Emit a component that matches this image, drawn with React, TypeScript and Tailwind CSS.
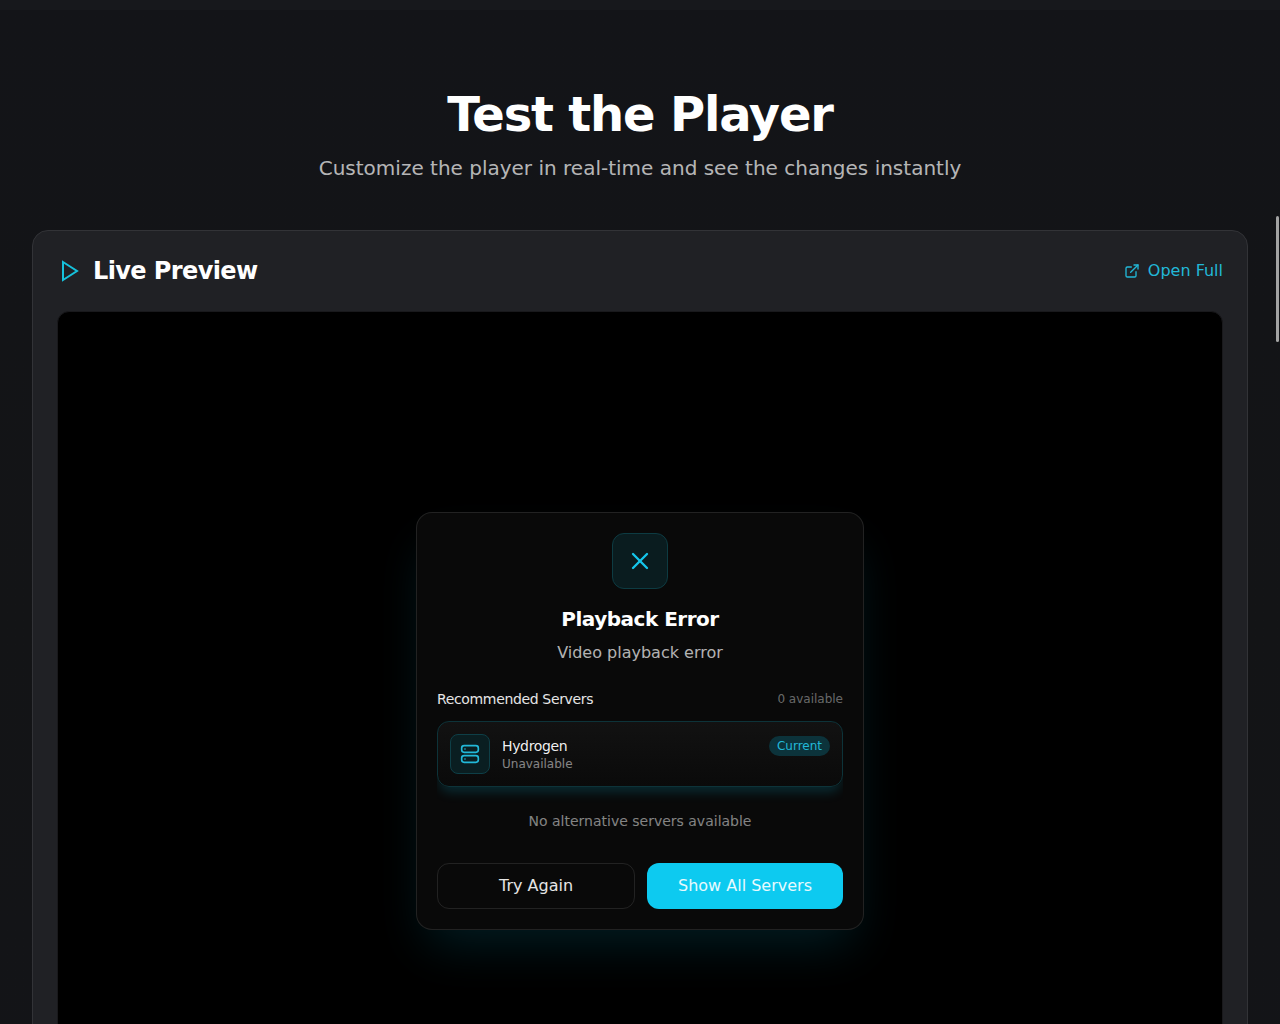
import { ExternalLink, X } from "lucide-react";

const servers = [{ name: "Hydrogen", status: "Unavailable", current: true }];

function PlayIcon({ className }: { className?: string }) {
  return (
    <svg
      className={className}
      viewBox="0 0 24 24"
      fill="none"
      stroke="currentColor"
      strokeWidth="2"
      aria-hidden="true"
    >
      <path d="M6 3l14 9-14 9V3z" />
    </svg>
  );
}

function ServerIcon({ className }: { className?: string }) {
  return (
    <svg
      className={className}
      viewBox="0 0 24 24"
      fill="none"
      stroke="currentColor"
      strokeWidth="2"
      strokeLinecap="round"
      aria-hidden="true"
    >
      <rect x="2" y="2" width="20" height="8" rx="3" />
      <rect x="2" y="14" width="20" height="8" rx="3" />
      <path d="M6 6h.01M6 18h.01" />
    </svg>
  );
}

function ServerRow({ server }: { server: (typeof servers)[number] }) {
  return (
    <li className="flex items-center gap-3 rounded-xl border border-[#0d3339] bg-linear-to-b from-[#121212] to-[#0a0a0a] p-3 shadow-[0_8px_12px_-3px_rgba(13,202,240,0.18)]">
      <div className="flex size-10 shrink-0 items-center justify-center rounded-lg border border-[#0e3f47] bg-[#0a1e21] text-[#22b8d8]">
        <ServerIcon className="size-5" />
      </div>
      <div className="min-w-0 flex-1">
        <div className="flex items-center justify-between">
          <span className="text-sm tracking-tight text-white/95">{server.name}</span>
          {server.current && (
            <span className="rounded-full bg-[#0c333b] px-2 py-0.5 text-xs text-[#22b8d8]">
              Current
            </span>
          )}
        </div>
        <p className="text-xs text-white/50">{server.status}</p>
      </div>
    </li>
  );
}

function PlaybackError() {
  return (
    <div
      role="alertdialog"
      aria-labelledby="error-title"
      className="w-full max-w-md rounded-2xl border border-white/10 bg-[#090909] p-5 shadow-[0_25px_50px_-12px_rgba(13,202,240,0.15)]"
    >
      <div className="flex flex-col items-center text-center">
        <div className="flex size-14 items-center justify-center rounded-xl border border-[#0d3b42] bg-[#0a1c1f] text-[#15c5ea]">
          <X className="size-7" aria-hidden="true" />
        </div>
        <h3 id="error-title" className="mt-4 text-xl font-semibold tracking-tight text-white">
          Playback Error
        </h3>
        <p className="mt-2 text-base text-white/70">Video playback error</p>
      </div>

      <div className="mt-6 flex items-center justify-between">
        <h4 className="text-sm tracking-tight text-white/90">Recommended Servers</h4>
        <span className="text-xs text-white/40">0 available</span>
      </div>
      <div className="mt-3 overflow-hidden">
        <ul>
          {servers.map((server) => (
            <ServerRow key={server.name} server={server} />
          ))}
        </ul>
        <p className="py-6 text-center text-sm text-white/50">No alternative servers available</p>
      </div>

      <div className="mt-2 flex gap-3">
        <button
          type="button"
          className="flex-1 rounded-xl border border-white/10 px-4 py-2.5 text-base text-white/90"
        >
          Try Again
        </button>
        <button
          type="button"
          className="flex-1 rounded-xl bg-[#0dcaf0] px-4 py-2.5 text-base text-white/90"
        >
          Show All Servers
        </button>
      </div>
    </div>
  );
}

export default function App() {
  return (
    <main className="h-screen overflow-hidden bg-[#131418] font-['DejaVu_Sans',sans-serif]">
      <div className="h-2.5 bg-[#17181c]" />
      <section className="bg-linear-to-b from-[#131418] via-[#131416] to-[#131418] px-8 py-20">
        <div className="mb-12 text-center">
          <h2 className="mb-4 text-5xl font-bold tracking-tight text-white">Test the Player</h2>
          <p className="text-xl text-white/70">
            Customize the player in real-time and see the changes instantly
          </p>
        </div>

        <div className="rounded-2xl border border-[#323337] bg-[#202125] p-6">
          <div className="mb-6 flex items-center justify-between">
            <h3 className="flex items-center gap-3 text-2xl font-bold tracking-tight text-white">
              <PlayIcon className="size-6 text-[#16c2dc]" />
              Live Preview
            </h3>
            <a href="#player" className="flex items-center gap-2 text-base text-[#22b8d8]">
              <ExternalLink className="size-4" aria-hidden="true" />
              Open Full
            </a>
          </div>
          <div
            id="player"
            className="flex h-[80vh] items-center justify-center overflow-hidden rounded-xl border border-[#19191c] bg-black"
          >
            <PlaybackError />
          </div>
        </div>
      </section>
      {/* scroll position */}
      <div className="fixed top-[216px] right-px h-[126px] w-[3px] rounded-full bg-[#a3a3a3]" />
    </main>
  );
}
